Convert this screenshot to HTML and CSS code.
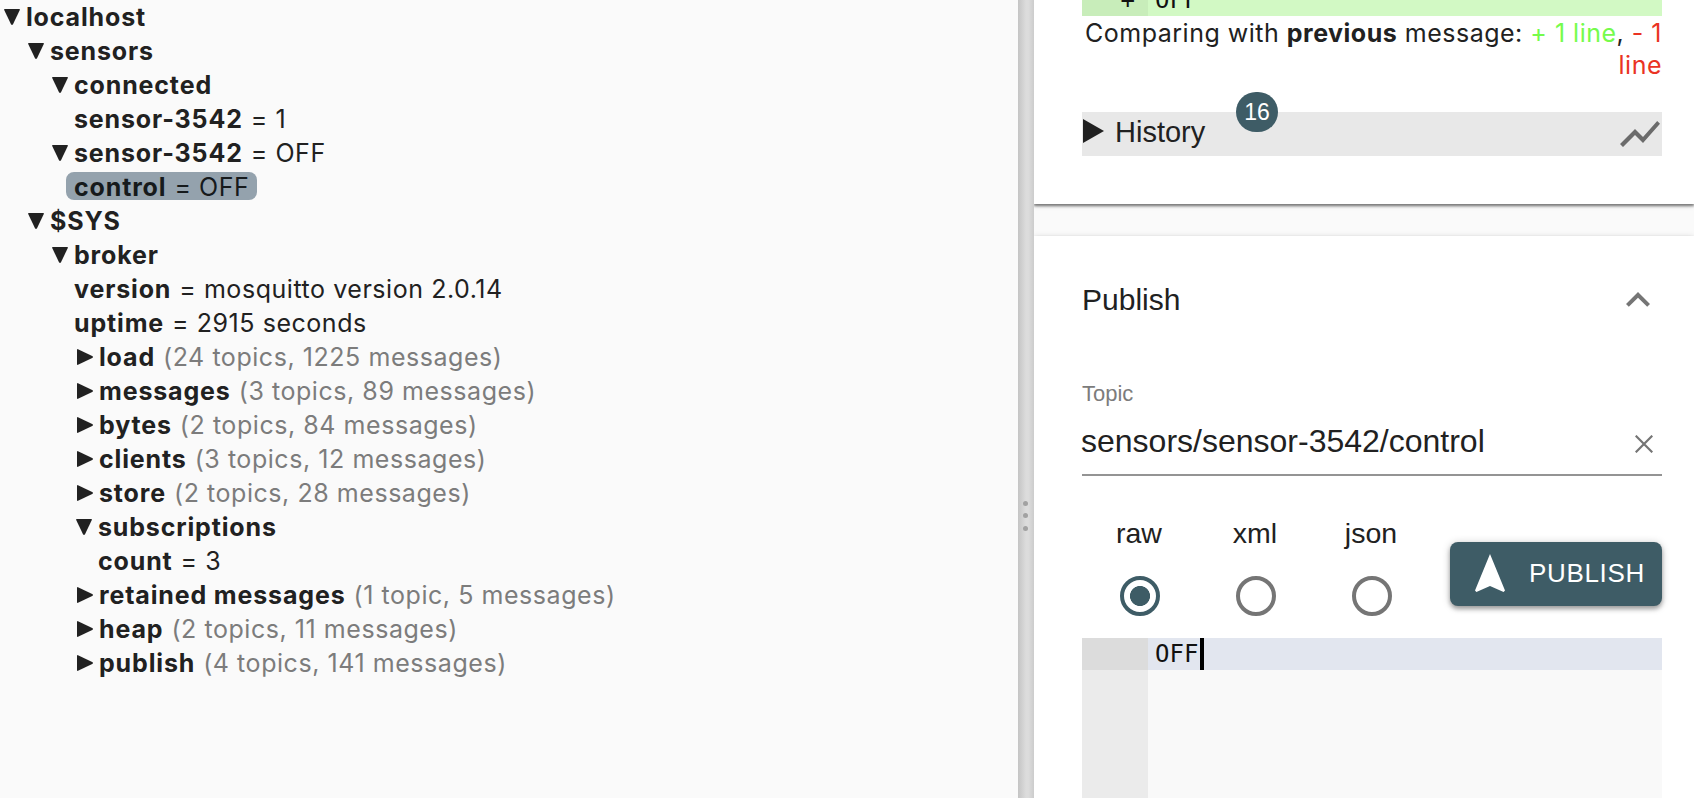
FILE: index.html
```
<!DOCTYPE html>
<html lang="en">
<head>
<meta charset="utf-8">
<title>MQTT Explorer</title>
<link rel="stylesheet" href="styles.css">
</head>
<body>
<svg class="defs" width="0" height="0">
  <symbol id="open" viewBox="0 0 16 16"><path d="M.8 0h14.4q1 .1.6 1L9 15.2q-1 1.6-2 0L.2 1Q-.2.1.8 0z"/></symbol>
  <symbol id="closed" viewBox="0 0 16 16"><path d="M0 .8Q.1-.2 1 .2L15.2 7q1.6 1 0 2L1 15.8q-.9.4-1-.6z"/></symbol>
</svg>
<main class="app">
  <section class="tree">
    <ul class="root">
      <li><div class="node"><svg class="arrow"><use href="#open"/></svg><b>localhost</b></div>
        <ul>
          <li><div class="node"><svg class="arrow"><use href="#open"/></svg><b>sensors</b></div>
            <ul>
              <li><div class="node"><svg class="arrow"><use href="#open"/></svg><b>connected</b></div>
                <ul><li><div class="node"><b>sensor-3542</b><span class="value">= 1</span></div></li></ul>
              </li>
              <li><div class="node"><svg class="arrow"><use href="#open"/></svg><b>sensor-3542</b><span class="value">= OFF</span></div>
                <ul><li><div class="node selected"><b>control</b><span class="value">= OFF</span></div></li></ul>
              </li>
            </ul>
          </li>
          <li><div class="node"><svg class="arrow"><use href="#open"/></svg><b>$SYS</b></div>
            <ul>
              <li><div class="node"><svg class="arrow"><use href="#open"/></svg><b>broker</b></div>
                <ul>
                  <li><div class="node"><b>version</b><span class="value">= mosquitto version 2.0.14</span></div></li>
                  <li><div class="node"><b>uptime</b><span class="value">= 2915 seconds</span></div></li>
                  <li><div class="node"><svg class="arrow closed"><use href="#closed"/></svg><b>load</b><span class="meta">(24 topics, 1225 messages)</span></div></li>
                  <li><div class="node"><svg class="arrow closed"><use href="#closed"/></svg><b>messages</b><span class="meta">(3 topics, 89 messages)</span></div></li>
                  <li><div class="node"><svg class="arrow closed"><use href="#closed"/></svg><b>bytes</b><span class="meta">(2 topics, 84 messages)</span></div></li>
                  <li><div class="node"><svg class="arrow closed"><use href="#closed"/></svg><b>clients</b><span class="meta">(3 topics, 12 messages)</span></div></li>
                  <li><div class="node"><svg class="arrow closed"><use href="#closed"/></svg><b>store</b><span class="meta">(2 topics, 28 messages)</span></div></li>
                  <li><div class="node"><svg class="arrow"><use href="#open"/></svg><b>subscriptions</b></div>
                    <ul><li><div class="node"><b>count</b><span class="value">= 3</span></div></li></ul>
                  </li>
                  <li><div class="node"><svg class="arrow closed"><use href="#closed"/></svg><b>retained messages</b><span class="meta">(1 topic, 5 messages)</span></div></li>
                  <li><div class="node"><svg class="arrow closed"><use href="#closed"/></svg><b>heap</b><span class="meta">(2 topics, 11 messages)</span></div></li>
                  <li><div class="node"><svg class="arrow closed"><use href="#closed"/></svg><b>publish</b><span class="meta">(4 topics, 141 messages)</span></div></li>
                </ul>
              </li>
            </ul>
          </li>
        </ul>
      </li>
    </ul>
  </section>
  <div class="splitter"><i></i><i></i><i></i></div>
  <aside class="side">
    <section class="card value-card">
      <div class="diff"><span class="diff-sign">+</span><span class="diff-code">OFF</span></div>
      <p class="compare">Comparing with <b>previous</b> message: <span class="added">+ 1 line</span>, <span class="removed">- 1<br>line</span></p>
      <div class="history">
        <svg class="history-arrow" viewBox="0 0 21 24"><path d="M0 0l21 12L0 24z"/></svg>
        <span class="history-title">History<span class="badge">16</span></span>
        <svg class="icon chart" viewBox="0 0 24 24"><path d="M3.5 18.49l6-6.01 4 4L22 6.92l-1.41-1.41-7.09 7.97-4-4L2 16.99z"/></svg>
      </div>
    </section>
    <section class="card publish-card">
      <header class="heading"><span>Publish</span>
        <svg class="icon" viewBox="0 0 24 24"><path d="M12 8l-6 6 1.41 1.41L12 10.83l4.59 4.58L18 14z"/></svg>
      </header>
      <label class="topic-label">Topic</label>
      <div class="topic"><span>sensors/sensor-3542/control</span>
        <svg class="clear" viewBox="0 0 18 18"><path d="M.7.7l16.6 16.6M17.3.7L.7 17.3"/></svg>
      </div>
      <div class="controls">
        <label class="option"><span>raw</span><i class="radio checked"></i></label>
        <label class="option"><span>xml</span><i class="radio"></i></label>
        <label class="option"><span>json</span><i class="radio"></i></label>
        <button class="publish"><svg viewBox="0 0 24 24"><path d="M12 2L4.5 20.29l.71.71L12 18l6.79 3 .71-.71z"/></svg><span>PUBLISH</span></button>
      </div>
      <div class="editor">
        <div class="gutter"><div class="gutter-active"></div></div>
        <div class="code"><div class="line">OFF<i class="cursor"></i></div></div>
      </div>
    </section>
  </aside>
</main>
</body>
</html>
```
FILE: styles.css
```
* { box-sizing: border-box; }
body {
  margin: 0;
  background: #fafafa;
  color: #212121;
  font-family: "Liberation Sans", Arial, sans-serif;
}
.defs { display: block; }
.app { display: flex; height: 798px; overflow: hidden; }

/* Topic tree */
.tree { width: 1018px; font: 25px/30px Inter, sans-serif; letter-spacing: .55px; }
.tree ul { margin: 0; padding: 0 0 0 24px; list-style: none; }
.tree .root { padding-left: 0; }
.root, .tree li { display: flow-root; }
.node {
  display: flex;
  width: max-content;
  height: 28px;
  margin: 2px 0 4px -6px;
  padding: 0 8px 0 9px;
  border-radius: 8px;
  white-space: nowrap;
}
.node b { margin-left: -1px; font-weight: 650; letter-spacing: .85px; }
.selected { background: #94a2ad; color: #161a1c; }
.value { margin-left: 8px; }
.meta { margin-left: 8px; color: #7c7c7c; }
.arrow { width: 16px; height: 16px; margin: 7px 7px 0 1px; fill: #212121; }
.arrow.closed { margin: 7px 7px 0 2px; }

.splitter {
  display: flex;
  flex-direction: column;
  align-items: center;
  width: 16px;
  padding: 501px 1px 0 0;
  gap: 7.3px;
  background: linear-gradient(90deg, #c4c4c4, #d0d0d0 25%, #dcdcdc 50%, #dcdcdc 65%, #ccc);
}
.splitter i { width: 5px; height: 5px; border-radius: 50%; background: #a2a2a2; }

/* Right column */
.side { flex: 1; display: flex; flex-direction: column; gap: 32px; overflow: hidden; }
.card {
  padding: 0 32px 0 48px;
  background: #fff;
  box-shadow: 0 2px 3px rgba(0,0,0,.3), 0 2px 2px rgba(0,0,0,.25), 0 1px 6px rgba(0,0,0,.15);
}
.value-card { height: 204px; flex: none; }
.diff {
  display: flex;
  align-items: flex-end;
  height: 16px;
  background: linear-gradient(90deg, #c8edba 66px, #d2f9c4 66px);
  font: 24px/32px "DejaVu Sans Mono", monospace;
  color: #111;
}
.diff-sign { width: 66px; padding-right: 13px; text-align: right; }
.diff-code { padding-left: 7px; }
.compare {
  margin: 0;
  padding-top: 1px;
  height: 96px;
  text-align: right;
  white-space: nowrap;
  font: 25px/32px Inter, sans-serif;
  letter-spacing: .5px;
}
.compare b { font-weight: 650; }
.added { color: #75fb4c; }
.removed { color: #ea3323; }
.history { display: flex; height: 44px; background: #e8e8e8; font-size: 29px; line-height: 41px; }
.history-arrow { width: 21px; height: 24px; margin: 7px 11px 0 1px; fill: #212121; }
.history-title { position: relative; flex: 1; }
.badge {
  position: absolute;
  left: 121px;
  top: -20px;
  width: 42px;
  height: 40px;
  border-radius: 20px;
  background: #3e5c66;
  color: #fff;
  font-size: 23px;
  line-height: 40px;
  text-align: center;
}
.icon { width: 48px; height: 48px; fill: #757575; }
.chart { margin: -2px -2px 0 0; fill: #6b6b6b; }

.publish-card { flex: 1; }
.heading { display: flex; justify-content: space-between; height: 148px; padding-top: 40px; font-size: 30px; line-height: 48px; }
.topic-label { display: block; height: 34px; color: #7c7c7c; font-size: 22px; line-height: 20px; }
.topic { display: flex; justify-content: space-between; height: 58px; border-bottom: 2px solid #949494; font-size: 32px; line-height: 46px; }
.topic span { margin-left: -1px; }
.clear { width: 18px; height: 18px; margin: 17px 9px 0 0; fill: none; stroke: #757575; stroke-width: 2.2; }
.controls { display: flex; height: 162px; }
.option { display: flex; flex-direction: column; align-items: center; width: 116px; padding-top: 37px; font-size: 28.5px; line-height: 40px; }
.option span { margin-right: 2px; }
.radio { width: 40px; height: 40px; margin-top: 23px; border: 4px solid #757575; border-radius: 50%; }
.radio.checked { border-color: #3e5c66; background: radial-gradient(circle, #3e5c66 9.7px, transparent 10.3px); }
.publish {
  display: flex;
  align-items: center;
  width: 212px;
  height: 64px;
  margin: 66px 0 0 auto;
  padding: 0 0 0 16px;
  border: 0;
  border-radius: 8px;
  background: #3e5c66;
  color: #fff;
  box-shadow: 0 3px 4px rgba(0,0,0,.3), 0 1px 8px rgba(0,0,0,.2);
  font: 26px/60px "Liberation Sans", Arial, sans-serif;
  letter-spacing: .65px;
}
.publish svg { width: 48px; height: 48px; margin-right: 15px; fill: #fff; }
.publish span { height: 62px; }
.editor { display: flex; height: 200px; background: #f9f9f9; font: 24px/32px "DejaVu Sans Mono", monospace; color: #111; }
.gutter { width: 66px; background: #ebebeb; }
.gutter-active { height: 32px; background: #dcdcdc; }
.code { flex: 1; }
.line { display: flex; height: 32px; padding-left: 7px; background: #e2e6ef; }
.cursor { width: 4px; height: 32px; margin-left: 2px; background: #000; }
```
